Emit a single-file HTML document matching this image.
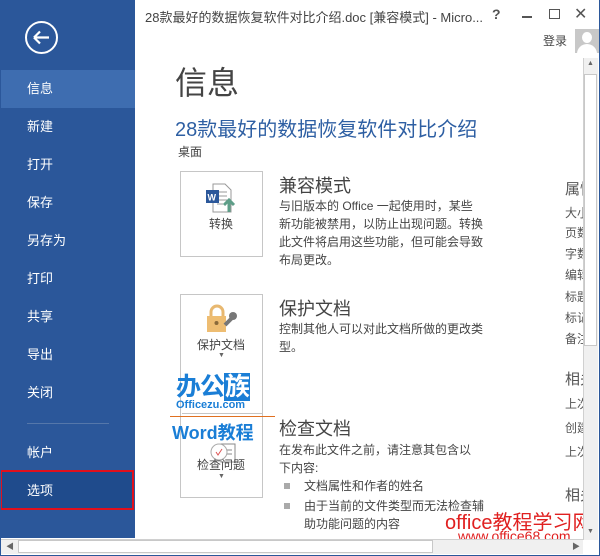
<!DOCTYPE html>
<html><head><meta charset="utf-8"><style>
*{margin:0;padding:0;box-sizing:border-box}
body{width:600px;height:556px;overflow:hidden;background:#fff;font-family:"Liberation Sans","Noto Sans CJK SC",sans-serif;position:relative;color:#444}
.a{position:absolute;white-space:nowrap}
#side{position:absolute;left:0;top:0;width:135px;height:538px;background:#2b579a}
.it{position:absolute;left:27px;color:#fff;font-size:13px}
.box{position:absolute;border:1px solid #c6c6c6;background:#fff}
.p{font-size:12px;line-height:18px;color:#444}
.r{position:absolute;left:565px;font-size:12px;color:#555}
</style></head><body>
<div style="position:absolute;inset:0;border:1px solid #2b579a;border-top:none;z-index:9;pointer-events:none"></div>
<div id="side">
 <svg class="a" style="left:24px;top:20px" width="35" height="35"><circle cx="17.5" cy="17.5" r="15.5" fill="none" stroke="#fff" stroke-width="2"/><path d="M10 17.5h15M10 17.5l6-6M10 17.5l6 6" stroke="#fff" stroke-width="2.2" fill="none"/></svg>
 <div class="a" style="left:0;top:70px;width:135px;height:38px;background:#3e6db0"></div>
 <div class="it" style="top:78px">信息</div>
 <div class="it" style="top:116px">新建</div>
 <div class="it" style="top:154px">打开</div>
 <div class="it" style="top:192px">保存</div>
 <div class="it" style="top:230px">另存为</div>
 <div class="it" style="top:268px">打印</div>
 <div class="it" style="top:306px">共享</div>
 <div class="it" style="top:344px">导出</div>
 <div class="it" style="top:382px">关闭</div>
 <div class="a" style="left:27px;top:423px;width:82px;height:1px;background:#5577aa"></div>
 <div class="it" style="top:442px">帐户</div>
 <div class="a" style="left:0;top:470px;width:134px;height:40px;background:#1f4b8c;border:2px solid #e0101c"></div>
 <div class="it" style="top:480px">选项</div>
</div>
<div class="a" style="left:145px;top:7px;font-size:13px;color:#444">28款最好的数据恢复软件对比介绍.doc [兼容模式] - Micro...</div>
<div class="a" style="left:492px;top:6px;font-size:14px;color:#555;font-weight:bold">?</div>
<div class="a" style="left:522px;top:16px;width:10px;height:2px;background:#555"></div>
<div class="a" style="left:549px;top:9px;width:11px;height:10px;border:1px solid #555"></div>
<div class="a" style="left:574px;top:4px;font-size:16px;color:#555">✕</div>
<div class="a" style="left:543px;top:32px;font-size:12px;color:#444">登录</div>
<div class="a" style="left:575px;top:29px;width:24px;height:24px;background:#c8c8c8;overflow:hidden"><div style="position:absolute;left:7px;top:3px;width:10px;height:11px;border-radius:50%;background:#fff"></div><div style="position:absolute;left:2px;top:15px;width:20px;height:14px;border-radius:10px 10px 0 0;background:#fff"></div></div>

<div class="a" style="left:175px;top:58px;font-size:32px;color:#444">信息</div>
<div class="a" style="left:175px;top:113px;font-size:20px;color:#2e5fa3">28款最好的数据恢复软件对比介绍</div>
<div class="a" style="left:178px;top:143px;font-size:12px;color:#444">桌面</div>

<div class="box" style="left:180px;top:171px;width:83px;height:86px">
 <svg class="a" style="left:24px;top:10px" width="34" height="32"><path d="M8 2h12l6 6v22H8z" fill="#fff" stroke="#999"/><path d="M12 10h10M12 14h10M12 18h10M12 22h6" stroke="#999"/><rect x="1" y="8" width="13" height="13" fill="#2b579a"/><text x="2.5" y="18.5" font-size="9" fill="#fff" font-weight="bold" font-family="Liberation Sans">W</text><path d="M24 30V19M19 23l5-5 5 5" stroke="#5e9e88" stroke-width="3" fill="none"/></svg>
 <div class="a" style="left:28px;top:43px;font-size:12px">转换</div>
</div>
<div class="a" style="left:279px;top:172px;font-size:18px;color:#444">兼容模式</div>
<div class="a p" style="left:279px;top:197px">与旧版本的 Office 一起使用时，某些<br>新功能被禁用，以防止出现问题。转换<br>此文件将启用这些功能，但可能会导致<br>布局更改。</div>

<div class="box" style="left:180px;top:294px;width:83px;height:204px"></div>
<div class="a" style="left:182px;top:413px;width:80px;height:1px;background:#c6c6c6"></div>
<svg class="a" style="left:203px;top:303px" width="36" height="32"><path d="M8 13V9a6 6 0 0112 0v4" stroke="#e8b870" stroke-width="3" fill="none"/><rect x="4" y="13" width="19" height="16" fill="#eebd72"/><circle cx="13.5" cy="20" r="2" fill="#8a6a3a"/><path d="M22 22l8-8" stroke="#777" stroke-width="4"/><circle cx="30" cy="13" r="4" fill="#777"/></svg>
<div class="a" style="left:197px;top:336px;font-size:12px">保护文档</div>
<div class="a" style="left:218px;top:352px;font-size:7px;color:#666">▼</div>
<div class="a" style="left:279px;top:295px;font-size:18px">保护文档</div>
<div class="a p" style="left:279px;top:320px">控制其他人可以对此文档所做的更改类<br>型。</div>

<svg class="a" style="left:209px;top:440px" width="30" height="28"><rect x="12" y="4" width="14" height="18" fill="#fff" stroke="#888"/><path d="M15 10h8M15 14h8" stroke="#888"/><circle cx="10" cy="12" r="8" fill="#fff" stroke="#aaa"/><path d="M7 12l2 3 4-6" stroke="#d55" fill="none"/></svg>
<div class="a" style="left:197px;top:456px;font-size:12px">检查问题</div>
<div class="a" style="left:218px;top:473px;font-size:7px;color:#666">▼</div>
<div class="a" style="left:279px;top:415px;font-size:18px">检查文档</div>
<div class="a p" style="left:279px;top:441px">在发布此文件之前，请注意其包含以<br>下内容:</div>
<div class="a" style="left:284px;top:483px;width:6px;height:6px;background:#aaa"></div>
<div class="a p" style="left:304px;top:477px">文档属性和作者的姓名</div>
<div class="a" style="left:284px;top:503px;width:6px;height:6px;background:#aaa"></div>
<div class="a p" style="left:304px;top:497px">由于当前的文件类型而无法检查辅<br>助功能问题的内容</div>

<div class="r" style="top:178px;font-size:15px">属性</div>
<div class="r" style="top:204px">大小</div>
<div class="r" style="top:224px">页数</div>
<div class="r" style="top:245px">字数</div>
<div class="r" style="top:266px">编辑</div>
<div class="r" style="top:288px">标题</div>
<div class="r" style="top:309px">标记</div>
<div class="r" style="top:330px">备注</div>
<div class="r" style="top:368px;font-size:15px">相关</div>
<div class="r" style="top:395px">上次</div>
<div class="r" style="top:419px">创建</div>
<div class="r" style="top:443px">上次</div>
<div class="r" style="top:484px;font-size:15px">相关</div>

<!-- watermark -->
<div class="a" style="left:176px;top:372px;font-size:25px;line-height:30px;font-weight:bold;color:#1a7ed6;letter-spacing:-1px">办公<span style="background:#1a7ed6;color:#fff;padding:0 1px">族</span></div>
<div class="a" style="left:176px;top:399px;font-size:11px;font-weight:bold;color:#1a7ed6">Officezu.com</div>
<div class="a" style="left:170px;top:416px;width:105px;height:1px;background:#e07020"></div>
<div class="a" style="left:172px;top:419px;font-size:18px;font-weight:bold;color:#1a7ed6">Word教程</div>
<div class="a" style="left:445px;top:506px;font-size:20px;color:#e02020">office教程学习网</div>
<div class="a" style="left:458px;top:528px;font-size:14px;color:#e02020">www.office68.com</div>

<!-- scrollbars -->
<div class="a" style="left:583px;top:58px;width:15px;height:482px;background:#f0f0f0;border-left:1px solid #d0d0d0"></div>
<div class="a" style="left:584px;top:74px;width:13px;height:272px;background:#fff;border:1px solid #c8c8c8"></div>
<div class="a" style="left:587px;top:60px;font-size:7px;color:#666">▲</div>
<div class="a" style="left:587px;top:528px;font-size:7px;color:#666">▼</div>
<div class="a" style="left:1px;top:539px;width:582px;height:15px;background:#f0f0f0;border-top:1px solid #d0d0d0"></div>
<div class="a" style="left:18px;top:540px;width:415px;height:13px;background:#fff;border:1px solid #c8c8c8"></div>
<div class="a" style="left:6px;top:541px;font-size:8px;color:#666">◀</div>
<div class="a" style="left:572px;top:541px;font-size:8px;color:#666">▶</div>
</body></html>
